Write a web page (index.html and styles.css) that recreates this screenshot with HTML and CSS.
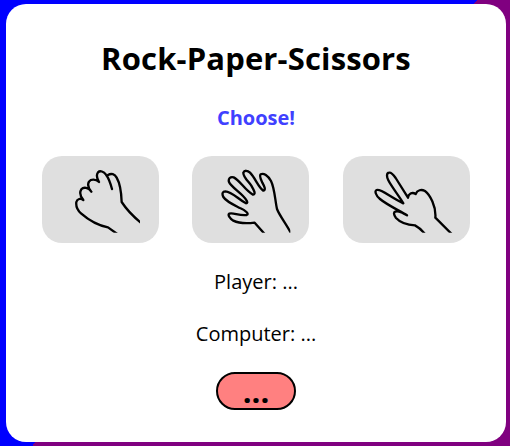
FILE: index.html
```html
<!DOCTYPE html>
<html lang="en">
<head>
<meta charset="utf-8">
<title>Rock-Paper-Scissors</title>
<link rel="stylesheet" href="styles.css">
</head>
<body>
<main class="game">
  <h1 class="title">Rock-Paper-Scissors</h1>
  <p class="prompt">Choose!</p>
  <div class="choices">
    <button class="choice" aria-label="Rock">
      <svg class="hand" width="117" height="87" viewBox="18 18 351 261">
        <clipPath id="rock-edge"><path d="M18 18H312V248H18Z"/></clipPath>
        <path clip-path="url(#rock-edge)" d="M228 117C223 98 218 84 210 74C203 64 192 61 186 67C181 74 183 86 189 96C179 87 165 87 159 95C154 104 158 116 166 125C157 112 143 110 136 118C130 127 134 140 142 150C134 143 124 147 121 156C119 171 125 181 135 190C159 211 190 227 216 232L244 252M216 75C226 69 236 72 242 83C250 97 256 126 257 156C270 176 291 199 316 219"/>
      </svg>
    </button>
    <button class="choice" aria-label="Paper">
      <svg class="hand" width="117" height="87" viewBox="18 18 351 261">
        <clipPath id="paper-edge"><path d="M18 18H313V248H18Z"/></clipPath>
        <path clip-path="url(#paper-edge)" d="M236 252L206 218C181 221 158 220 142 212C131 205 124 194 130 191C142 187 159 198 182 195C191 192 178 181 162 174C144 165 121 155 112 141C107 131 110 124 118 124C138 125 157 148 180 160C189 160 180 147 171 138C156 123 134 108 129 96C126 86 133 79 143 82C161 90 177 121 201 134C211 132 203 119 196 107C186 93 171 80 172 68C175 60 185 61 192 68C208 84 217 112 232 122C241 120 234 107 229 98C224 88 219 78 224 73C233 68 246 77 255 93C266 115 267 150 273 177C281 198 301 222 314 248"/>
      </svg>
    </button>
    <button class="choice choice-wide" aria-label="Scissors">
      <svg class="hand" width="127" height="87" viewBox="21 18 381 261">
        <clipPath id="scissors-edge"><path d="M21 18H360V248H21Z"/></clipPath>
        <path clip-path="url(#scissors-edge)" d="M267 252C258 241 247 231 237 226C217 225 193 218 180 204C173 195 172 187 178 185C188 182 200 188 213 196C188 181 151 163 132 147C119 137 115 122 122 120C135 116 158 138 202 160C190 139 167 111 157 91C151 79 152 69 159 68C166 66 172 74 179 84L216 143C217 132 228 125 239 132C244 120 256 117 267 123C282 134 301 170 298 203L347 252"/>
      </svg>
    </button>
  </div>
  <p class="line">Player: ...</p>
  <p class="line">Computer: ...</p>
  <div class="result">...</div>
</main>
</body>
</html>
```

FILE: styles.css
```css
* { box-sizing: border-box; }

body {
  margin: 0;
  height: 446px;
  padding: 4px 4px 4px 6px;
  background: linear-gradient(135deg, blue 50%, purple 50%);
  font-family: "Open Sans", sans-serif;
  color: #000;
  overflow: hidden;
}

.game {
  height: 438px;
  padding: 32px 36px 0;
  border-radius: 20px;
  background: #fff;
  display: flex;
  flex-direction: column;
  align-items: center;
}

.title {
  margin: 0;
  font-size: 31px;
  line-height: 44px;
  font-weight: 700;
  letter-spacing: 0.15px;
}

.prompt {
  margin: 24px 0 24px;
  font-size: 20px;
  line-height: 28px;
  font-weight: 700;
  color: #4040ff;
}

.choices {
  width: 428px;
  display: flex;
  gap: 33px;
}

.choice {
  width: 117px;
  height: 87px;
  padding: 0;
  border: 0;
  border-radius: 20px;
  background: #dfdfdf;
}

.choice-wide {
  width: 127px;
  margin-left: 1px;
}

.hand {
  display: block;
  fill: none;
  stroke: #000;
  stroke-width: 7;
  stroke-linecap: round;
  stroke-linejoin: round;
}

.line {
  margin: 25px 0 0;
  font-size: 20px;
  line-height: 27px;
  font-weight: 400;
}

.result {
  margin-top: 25px;
  width: 80px;
  height: 38px;
  border: 2px solid #000;
  border-radius: 20px;
  background: #ff8080;
  font-size: 31px;
  line-height: 34px;
  font-weight: 700;
  text-align: center;
}
```
